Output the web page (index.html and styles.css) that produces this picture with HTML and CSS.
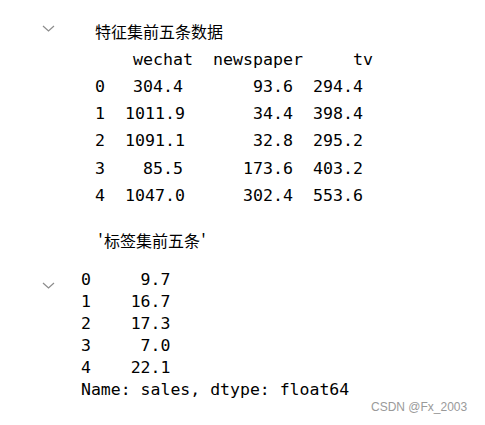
FILE: index.html
```html
<!DOCTYPE html>
<html lang="zh">
<head>
<meta charset="utf-8">
<title>Output</title>
<link rel="stylesheet" href="styles.css">
</head>
<body>
<div class="output out1">
  <div class="gutter">
    <svg class="chev chev1" width="13" height="7" viewBox="0 0 13 7"><path d="M1 1 L6.5 6 L12 1" fill="none" stroke="#8c8c8c" stroke-width="1.2"/></svg>
  </div>
  <div class="content html-out">
    <div class="caption">特征集前五条数据</div>
    <div class="df">
      <div class="i"></div><div class="h">wechat</div><div class="h">newspaper</div><div class="h">tv</div>
      <div class="i">0</div><div class="v">304.4</div><div class="v">93.6</div><div class="v">294.4</div>
      <div class="i">1</div><div class="v">1011.9</div><div class="v">34.4</div><div class="v">398.4</div>
      <div class="i">2</div><div class="v">1091.1</div><div class="v">32.8</div><div class="v">295.2</div>
      <div class="i">3</div><div class="v">85.5</div><div class="v">173.6</div><div class="v">403.2</div>
      <div class="i">4</div><div class="v">1047.0</div><div class="v">302.4</div><div class="v">553.6</div>
    </div>
    <div class="caption label"><span class="q">'</span>标签集前五条<span class="q">'</span></div>
  </div>
</div>
<div class="output out2">
  <div class="gutter">
    <svg class="chev chev2" width="13" height="7" viewBox="0 0 13 7"><path d="M1 1 L6.5 6 L12 1" fill="none" stroke="#8c8c8c" stroke-width="1.2"/></svg>
  </div>
  <pre class="content text-out">0     9.7
1    16.7
2    17.3
3     7.0
4    22.1
Name: sales, dtype: float64</pre>
</div>
<div class="watermark">CSDN @Fx_2003</div>
</body>
</html>
```
FILE: styles.css
```css
html, body {
  margin: 0;
  padding: 0;
  background: #ffffff;
}
body {
  width: 485px;
  height: 425px;
  position: relative;
  overflow: hidden;
  color: #000000;
}
.output {
  display: flex;
}
.gutter {
  width: 81px;
  flex: 0 0 81px;
}
.chev {
  display: block;
  margin-left: 42px;
}
.chev1 {
  margin-top: 25px;
}
.chev2 {
  margin-top: 31px;
}
.html-out {
  padding-top: 20px;
  padding-left: 14px;
}
.caption {
  font-family: "Noto Sans CJK SC", "Noto Sans", sans-serif;
  font-size: 16px;
  line-height: 22px;
  height: 25.5px;
}
.caption.label {
  margin-top: 20px;
  height: 22px;
  padding-left: 2px;
}
.q {
  display: inline-block;
  width: 7px;
  text-align: center;
}
.df {
  display: grid;
  grid-template-columns: 30px 68px 110px 70px;
  font-family: "DejaVu Sans Mono", "Liberation Mono", monospace;
  font-size: 16.6px;
  line-height: 27.25px;
}
.df .i {
  text-align: left;
}
.df .h {
  text-align: right;
}
.df .v {
  text-align: right;
  padding-right: 10px;
}
.text-out {
  margin: 18px 0 0 0;
  font-family: "DejaVu Sans Mono", "Liberation Mono", monospace;
  font-size: 16.5px;
  line-height: 22px;
}
.watermark {
  position: absolute;
  left: 371px;
  top: 399px;
  font-family: "Liberation Sans", Arial, sans-serif;
  font-size: 12px;
  line-height: 16px;
  color: #9a9a9a;
}
```
